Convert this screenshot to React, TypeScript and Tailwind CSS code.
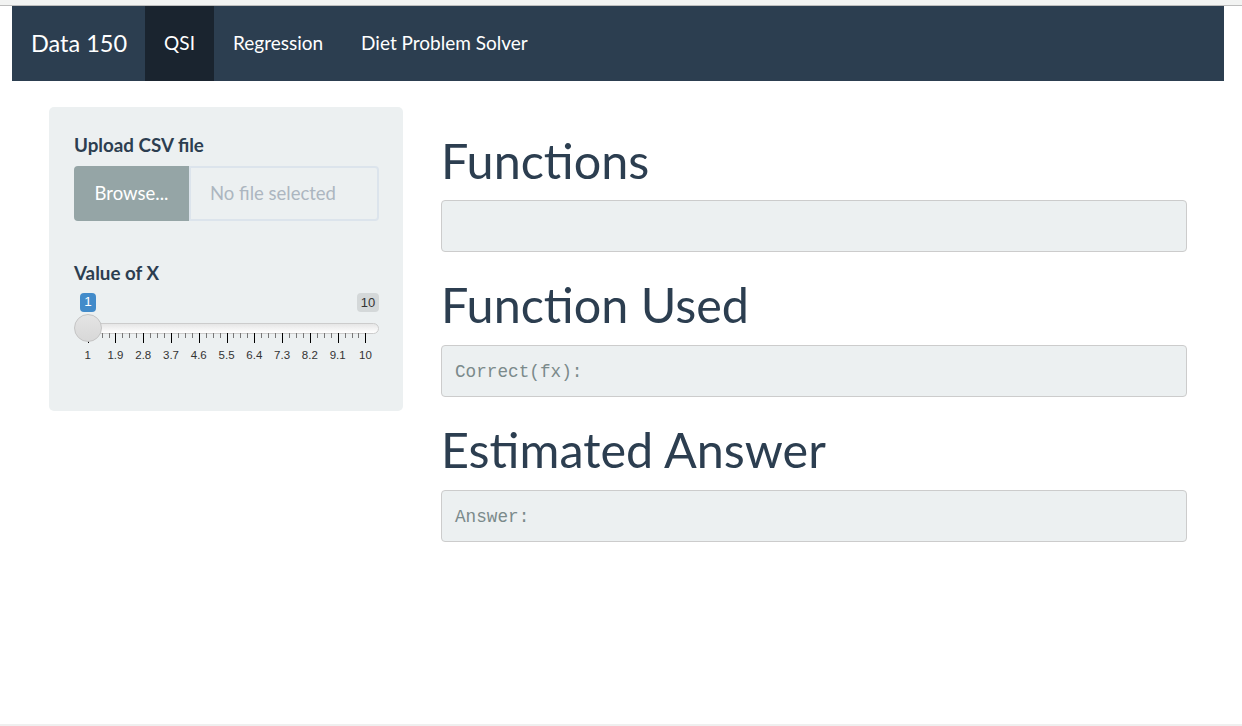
import React from "react";

const ticks = Array.from({ length: 11 }, (_, i) => 1 + i * 0.9);

function Slider() {
  const start = 12.7;
  const step = 27.77;
  return (
    <div className="relative ml-[1px] h-[70px] w-[304px]">
      <span className="absolute left-[5px] top-0 flex h-[19px] w-[16px] items-center justify-center rounded-[4px] bg-[#428bca] text-[13.5px] text-white font-['Liberation_Sans',sans-serif]">
        1
      </span>
      <span className="absolute right-0 top-0 flex h-[19px] w-[22px] items-center justify-center rounded-[4px] bg-[#d4d8d9] text-[13px] text-[#333] font-['Liberation_Sans',sans-serif]">
        10
      </span>
      <div className="absolute left-0 right-0 top-[30px] h-[11px] rounded-full border border-[#cccccc] bg-gradient-to-b from-[#e6e6e6] to-[#ffffff]" />
      <svg className="absolute left-0 top-[40px]" width="304" height="11">
        {ticks.map((_, i) => {
          const x = Math.round(start + i * step) + 0.5;
          return (
            <g key={i}>
              <line x1={x} x2={x} y1={0} y2={10} stroke="#000" strokeWidth="1" />
              {i < 10 &&
                [1, 2, 3].map((m) => {
                  const mx = Math.round(start + i * step + (m * step) / 4) + 0.5;
                  return (
                    <line key={m} x1={mx} x2={mx} y1={0} y2={5} stroke="#777" strokeWidth="1" />
                  );
                })}
            </g>
          );
        })}
      </svg>
      <div className="absolute left-[-1px] top-[21px] h-[28px] w-[28px] rounded-full border border-[#c4c4c4] bg-gradient-to-b from-[#e4e4e4] to-[#d8d8d8]" />
      {ticks.map((v, i) => (
        <span
          key={i}
          className="absolute top-[55px] -translate-x-1/2 text-[11.5px] leading-[14px] text-[#333] font-['Liberation_Sans',sans-serif]"
          style={{ left: start + i * step }}
        >
          {Number.isInteger(Math.round(v * 10) / 10) ? Math.round(v) : (Math.round(v * 10) / 10).toFixed(1)}
        </span>
      ))}
    </div>
  );
}

function Output({ text }: { text?: string }) {
  return (
    <div className="flex h-[52px] items-center rounded-[4px] border border-[#cccccc] bg-[#ecf0f1] pl-[13px] pt-[2px] text-[17.7px] text-[#7b8a8b] font-['Liberation_Mono',monospace]">
      {text}
    </div>
  );
}

export default function App() {
  return (
    <div className="flex h-[726px] flex-col bg-white font-['Lato',sans-serif]">
      <div className="h-[6px] border-b border-[#bdbdbd] bg-[#f2f3f2]" />
      <nav className="ml-[12px] flex h-[75px] w-[1212px] items-stretch bg-[#2c3e50] text-white">
        <div className="flex items-center pl-[19px] pr-[18px] text-[23.5px]">Data 150</div>
        <div className="flex items-center bg-[#1a242f] px-[19px] text-[19px]">QSI</div>
        <div className="flex items-center px-[19px] text-[19px]">Regression</div>
        <div className="flex items-center px-[19px] text-[19px]">Diet Problem Solver</div>
      </nav>

      <div className="flex gap-[38px] pl-[49px] pt-[26px]">
        <aside className="h-[304px] w-[354px] rounded-[5px] bg-[#ecf0f1] pl-[25px] pr-[24px] pt-[25px]">
          <label className="block text-[18.8px] font-bold leading-[26px] text-[#2c3e50]">Upload CSV file</label>
          <div className="mt-[8px] flex h-[55px]">
            <div className="flex w-[115px] items-center justify-center rounded-l-[4px] bg-[#95a5a6] text-[18.5px] text-white">
              Browse...
            </div>
            <div className="flex flex-1 items-center rounded-r-[4px] border-2 border-[#dce4ec] pl-[19px] text-[18.5px] text-[#acb6c0]">
              No file selected
            </div>
          </div>
          <label className="mt-[39px] block text-[18.8px] font-bold leading-[26px] text-[#2c3e50]">Value of X</label>
          <div className="mt-[7px]">
            <Slider />
          </div>
        </aside>

        <main className="w-[746px] pt-[26px] text-[#2c3e50]">
          <h1 className="mb-[12px] text-[48.5px] leading-[55px]">Functions</h1>
          <Output />
          <h1 className="mb-[13px] mt-[25px] text-[48.5px] leading-[55px]">Function Used</h1>
          <Output text="Correct(fx):" />
          <h1 className="mb-[13px] mt-[25px] text-[48.5px] leading-[55px]">Estimated Answer</h1>
          <Output text="Answer:" />
        </main>
      </div>

      <div className="mt-auto h-[2px] bg-[#efefef]" />
    </div>
  );
}
